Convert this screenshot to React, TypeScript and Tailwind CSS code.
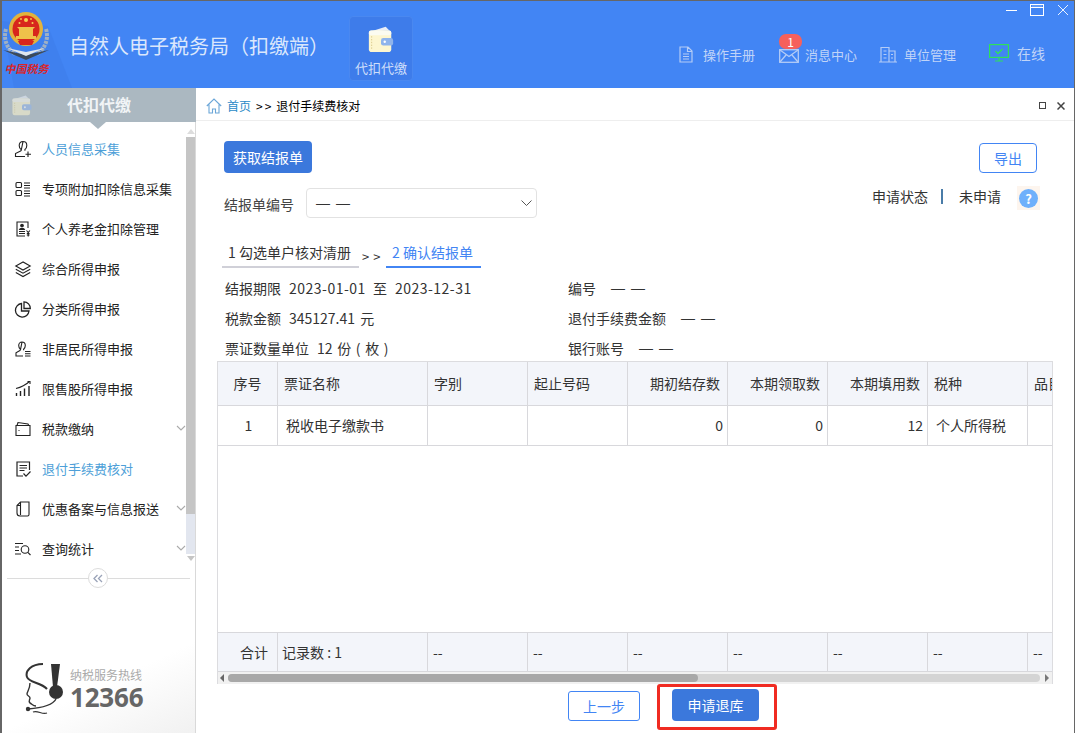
import React from "react";

const S = (p: React.SVGProps<SVGSVGElement>) => (
  <svg viewBox="0 0 18 18" width="18" height="18" fill="none" stroke="#222" strokeWidth="1.1" {...p} />
);

const Wallet = ({ w = 30, dim = false }: { w?: number; dim?: boolean }) => (
  <svg viewBox="0 0 30 30" width={w} height={w} style={{ opacity: dim ? 0.55 : 1 }}>
    <path d="M4 7 L20 2 L24 6 Z" fill="#e8eef8" />
    <rect x="2" y="6" width="24" height="23" rx="3" fill="#fdf6cf" />
    <rect x="2" y="6" width="24" height="5" rx="2" fill="#fbfbf0" />
    <path d="M5 12v14" stroke="#d8c98a" strokeWidth="1" strokeDasharray="1.5 1.5" />
    <rect x="15" y="14" width="13" height="8" rx="2.5" fill="#8fb4ec" />
    <circle cx="19" cy="18" r="1.3" fill="#fff" />
  </svg>
);

const icons: Record<string, React.ReactNode> = {
  person: (
    <S>
      <path d="M9 1.500c2.500 0 3.800 1.700 3.800 3.900 0 1.900-.9 3.300-1.900 4.100v1.300M7.100 10.800V9.500c-1-.8-1.900-2.200-1.900-4.100C5.200 3.200 6.500 1.500 9 1.500Z" />
      <path d="M7.100 10.800 1.500 13.500V16.500h9.500M14 11.500v5.500M11.500 14.200H17" />
    </S>
  ),
  list: (
    <S>
      <rect x="2" y="2.500" width="5.500" height="5" rx="1" />
      <rect x="2" y="10.500" width="5.500" height="5" rx="1" />
      <path d="M10 3h6M10 5.500h6M10 8h6M10 11h6M10 13.500h6M10 16h6" />
    </S>
  ),
  pension: (
    <S>
      <path d="M14 8V2H3v14h8" />
      <circle cx="8" cy="5.500" r="1.300" fill="#222" />
      <path d="M5.500 9.500c.3-1.500 4.700-1.500 5 0ZM5 11.500h6M5 13.500h6" />
      <path d="M12.500 10.500l1.700 2 1.700-2M14.200 12.500v4M12.800 13.500h2.800M12.800 15h2.800" />
    </S>
  ),
  layers: (
    <S>
      <path d="M9 2 1.800 6 9 10l7.200-4Z" />
      <path d="M1.800 9.200 9 13.200l7.200-4M1.800 12.500 9 16.500l7.200-4" />
    </S>
  ),
  pie: (
    <S strokeWidth="1.300">
      <path d="M7.500 3.500a6.800 6.800 0 1 0 7.500 7.500H7.500Z" />
      <path d="M10 1.800a6.500 6.500 0 0 1 6.300 6.700H10Z" />
    </S>
  ),
  nonres: (
    <S>
      <path d="M8 2c2 0 3.300 1.500 3.300 3.500 0 1.700-.8 3-1.700 3.700v1M6.400 10.200v-1c-.9-.7-1.700-2-1.700-3.700C4.700 3.500 6 2 8 2Z" />
      <path d="M6.400 10.200 2 12.800V16h7M11 11.500h5.500M11 13.700h5.500M11 16h5.500" />
    </S>
  ),
  bars: (
    <S strokeWidth="1.400">
      <path d="M2.500 16v-3M6.500 16v-5M10.500 16V8.500M15 16V6" />
      <path d="M2 8.500C6 7.500 11 5.500 15.500 1.500" strokeWidth="1.100" />
      <path d="M13.500 1.500h2.500V4" strokeWidth="1.100" />
    </S>
  ),
  wallet: (
    <S>
      <path d="M2 6V15.500H16V5.500H2ZM3 5.500 4 2.500l10 1.500.8 1.500" />
      <path d="M4.500 10.500h1" />
    </S>
  ),
  doc: (
    <S strokeWidth="1.200">
      <path d="M9 16H3V2h12.500v8" />
      <path d="M5.500 5.500h7.500M5.500 8h7.500M5.500 10.500h5" />
      <path d="M9.500 13.500l2.500 2.700 4.500-4.700" />
    </S>
  ),
  copy: (
    <S>
      <path d="M6.500 2H15v12.500a1.500 1.500 0 0 1-1.500 1.500H6a3 3 0 0 1-3-3V5.500Z" />
      <path d="M6.500 2v13M3 5.500h3.500" />
    </S>
  ),
  search: (
    <S>
      <path d="M1 3.500h8M1 7h4M1 10.500h4M1 14h6" />
      <circle cx="11" cy="9.500" r="3.800" />
      <path d="M13.800 12.300 16.500 15" />
    </S>
  ),
};

const menu = [
  { t: "人员信息采集", i: "person", on: true },
  { t: "专项附加扣除信息采集", i: "list" },
  { t: "个人养老金扣除管理", i: "pension" },
  { t: "综合所得申报", i: "layers" },
  { t: "分类所得申报", i: "pie" },
  { t: "非居民所得申报", i: "nonres" },
  { t: "限售股所得申报", i: "bars" },
  { t: "税款缴纳", i: "wallet", arrow: true },
  { t: "退付手续费核对", i: "doc", on: true },
  { t: "优惠备案与信息报送", i: "copy", arrow: true },
  { t: "查询统计", i: "search", arrow: true },
];

const Emblem = () => (
  <svg viewBox="0 0 50 50" width="50" height="50">
    <path d="M5 18C2 28 6 38 14 43M45 18c3 10-1 20-9 25" stroke="#9fb0c4" strokeWidth="4" strokeDasharray="3 1" fill="none" />
    <path d="M2 39 25 49 48 39 25 44Z" fill="#3c4a5a" />
    <path d="M6 37 25 45 44 37 25 41Z" fill="#dfe6ee" />
    <circle cx="25" cy="18" r="17" fill="#e2b33c" />
    <circle cx="25" cy="18" r="13.500" fill="#d8261c" />
    <path d="M15 25h20v3H15ZM18 18h14v7H18Z" fill="#efc14a" />
    <path d="M16 16h18l-2 2H18Z" fill="#efc14a" />
    <circle cx="25" cy="9" r="2" fill="#f5d050" />
    <circle cx="18.500" cy="12" r="1" fill="#f5d050" />
    <circle cx="31.500" cy="12" r="1" fill="#f5d050" />
    <circle cx="20" cy="8" r=".9" fill="#f5d050" />
    <circle cx="30" cy="8" r=".9" fill="#f5d050" />
    <path d="M17 30h16l-2 4H19Z" fill="#d8261c" />
  </svg>
);

const TopLink = ({ icon, text, wide }: { icon: React.ReactNode; text: string; wide?: boolean }) => (
  <div className={`flex items-center ${wide ? "text-[14px]" : "text-[13px]"} text-[#c0d4f8]`}>
    {icon}
    <span>{text}</span>
  </div>
);

const cols = "grid grid-cols-[60px_150px_100px_100px_100px_100px_100px_100px_100px] w-[1010px]";
const cell = "flex items-center border-r border-[#d8d8dc] text-[14px] text-[#333] min-w-0 whitespace-nowrap";

const Info = ({ label, children, gap = "ml-2" }: { label: string; children: React.ReactNode; gap?: string }) => (
  <div className="h-[30px] flex items-center text-[14px] text-[#333] whitespace-pre">
    <span>{label}</span>
    <span className={gap}>{children}</span>
  </div>
);

const Dash = () => <span className="font-['Liberation_Sans'] tracking-[1px]">— —</span>;

export default function App() {
  return (
    <div
      className="w-[1075px] h-[733px] flex flex-col overflow-hidden bg-white border-t border-l-2 border-r border-[#666666]"
      style={{ fontFamily: '"Noto Sans CJK SC", "Noto Sans", sans-serif' }}
    >
      {/* header */}
      <header className="h-[87px] shrink-0 bg-[#4285f4] flex relative">
        <svg className="absolute left-0 top-0" width="90" height="87">
          <path d="M0 20 L46 25 L70 87 H12 Z" fill="#3f80ee" />
        </svg>
        <div className="relative w-[67px] shrink-0 pt-[10px] flex flex-col items-center">
          <div className="w-[50px] -ml-[20px]"><Emblem /></div>
          <span className="-ml-[18px] mt-px text-[11px] leading-[13px] font-bold italic text-[#d9252b] whitespace-nowrap">中国税务</span>
        </div>
        <h1 className="relative w-[280px] shrink-0 text-[20px] leading-[28px] font-normal text-[#dbe7fc] whitespace-nowrap pt-[31px]">自然人电子税务局（扣缴端）</h1>
        <div className="relative mt-[15px] w-[64px] h-[65px] rounded-[4px] bg-[#3e7cea] border border-[#4a88f0] flex flex-col items-center pt-[8px]">
          <Wallet w={28} />
          <span className="mt-[7px] text-[13px] leading-[16px] text-[#cfdffa] whitespace-nowrap">代扣代缴</span>
        </div>
        <div className="relative flex-1 flex flex-col">
          <div className="h-[21px] flex justify-end items-start gap-[12px] pr-[4px] pt-[3px]">
            <svg width="12" height="14"><path d="M0 6.500h11" stroke="#fff" /></svg>
            <svg width="15" height="13"><rect x=".5" y=".5" width="13" height="11" fill="none" stroke="#fff" /><path d="M1 3.500h12" stroke="#fff" /><path d="M2.500 2h9" stroke="#fff" strokeWidth=".7" strokeDasharray="1 1" /></svg>
            <svg width="13" height="13"><path d="M1 1l10 10M11 1 1 11" stroke="#fff" strokeWidth=".9" /></svg>
          </div>
          <div className="flex items-center pl-[265px] pt-[21px] h-[44px]">
            <div className="w-[101px]">
              <TopLink
                text="操作手册"
                icon={
                  <svg width="16" height="17" viewBox="0 0 16 17" className="mr-[9px]" fill="none" stroke="#b4ccf6" strokeWidth="1.200">
                    <path d="M2 1h8l4 4v11H2ZM9.500 1v4.500H14M5 8h6M5 10.500h6M5 13h6" />
                  </svg>
                }
              />
            </div>
            <div className="w-[100px] relative">
              <span className="absolute -top-[11px] left-0 w-[23px] h-[15px] rounded-[7px] bg-[#f6605c] text-white text-[12px] leading-[15px] text-center z-10">1</span>
              <TopLink
                text="消息中心"
                icon={
                  <svg width="20" height="14" viewBox="0 0 20 14" className="mr-[6px] mt-[2px]" fill="none" stroke="#b4ccf6" strokeWidth="1.300">
                    <rect x=".7" y=".7" width="18.600" height="12.600" />
                    <path d="M1 1l9 6.500L19 1M1 13l6-7M19 13l-6-7" />
                  </svg>
                }
              />
            </div>
            <div className="w-[110px]">
              <TopLink
                text="单位管理"
                icon={
                  <svg width="18" height="17" viewBox="0 0 18 17" className="mr-[7px]" fill="none" stroke="#b4ccf6" strokeWidth="1.200">
                    <path d="M0 16h18M2 16V1.500h8V16M10 5h6v11M4.500 5h3M4.500 8.500h3M4.500 12h3M12 8.500h2M12 12h2" />
                  </svg>
                }
              />
            </div>
            <div className="-mt-[3px]">
              <TopLink
                wide
                text="在线"
                icon={
                  <svg width="20" height="18" viewBox="0 0 20 18" className="mr-[8px]" fill="none" stroke="#2fe05a" strokeWidth="1.200">
                    <rect x=".6" y=".6" width="18.800" height="12.800" />
                    <path d="M6.500 7l2.500 2.500L13.500 5" strokeWidth="1.400" />
                    <path d="M10 13.500v3M6 17h8" />
                  </svg>
                }
              />
            </div>
          </div>
        </div>
      </header>

      <div className="flex-1 flex min-h-0">
        {/* sidebar */}
        <aside className="w-[194px] shrink-0 flex flex-col border-r border-[#d9d9d9] relative">
          <div className="h-[34px] shrink-0 bg-[#abb8c1] flex items-center relative -mr-px">
            <div className="ml-[9px] w-[56px]"><Wallet w={22} dim /></div>
            <span className="text-[16px] font-bold text-[#f1f4f6] -mt-[2px]">代扣代缴</span>
            <svg className="absolute left-[88px] top-[34px] z-10" width="16" height="7"><path d="M0 0h16L8 7Z" fill="#abb8c1" /></svg>
          </div>
          <div className="h-[440px] shrink-0 flex">
            <ul className="flex-1 pt-[7px] overflow-hidden">
              {menu.map((m) => (
                <li key={m.t} className="h-10 flex items-center pl-[12px] pr-0">
                  <span className="w-[28px] shrink-0">{icons[m.i]}</span>
                  <span className={`text-[13px] whitespace-nowrap ${m.on ? "text-[#4e9fd8]" : "text-[#222]"}`}>{m.t}</span>
                  {m.arrow && (
                    <svg className="ml-auto -mt-[2px]" width="10" height="6"><path d="M1 1l4 4 4-4" fill="none" stroke="#aaa" strokeWidth="1.100" /></svg>
                  )}
                </li>
              ))}
            </ul>
            <div className="w-[9px] shrink-0 flex flex-col">
              <div className="h-[15px] flex items-end justify-center pb-[3px]">
                <svg width="8" height="5"><path d="M4 0l4 5H0Z" fill="#ddd" /></svg>
              </div>
              <div className="h-[377px] bg-[#c5c5c5]" />
              <div className="flex-1 bg-[#e2e6ef]" />
              <div className="h-[8px] bg-white flex items-center justify-center">
                <svg width="8" height="5"><path d="M0 0h8L4 5Z" fill="#c5c5c5" /></svg>
              </div>
            </div>
          </div>
          <div className="h-[32px] shrink-0 flex items-center pl-[5px] pr-[5px] relative">
            <div className="flex-1 h-px bg-[#dcdcdc]" />
            <div className="absolute left-[86px] top-[6px] w-5 h-5 rounded-full bg-white border border-[#dcdcdc] flex items-center justify-center">
              <svg width="10" height="9"><path d="M4.500 1 1 4.500 4.500 8M9 1 5.500 4.500 9 8" fill="none" stroke="#9aa3b8" strokeWidth="1.300" /></svg>
            </div>
          </div>
          <div className="flex-1 flex items-start pl-[23px] pt-[70px] bg-[linear-gradient(155deg,#ffffff_60%,#f1f1f1_100%)]">
            <svg width="40" height="54" viewBox="0 0 40 54" className="shrink-0 -mt-[1px]">
              <path d="M18 1C6 1 0 8 2 14c2 6 14 5 20 12" fill="none" stroke="#333" strokeWidth="2" />
              <path d="M26 1h9l-3 23h-4Z" fill="#333" />
              <circle cx="31" cy="29" r="7" fill="#333" />
              <path d="M5 20c0 6-3 9-3 11 0 2 3 2 3 4 0 2-2 3 0 5 2 1 3 3 6 3" fill="none" stroke="#333" strokeWidth="1.400" />
              <path d="M31 36C28 42 16 45 3 46" fill="none" stroke="#333" strokeWidth="1.400" />
              <circle cx="3" cy="46" r="2.200" fill="#333" />
              <path d="M8 49c5-2 9 3 14 1" fill="none" stroke="#333" strokeWidth="1.200" />
            </svg>
            <div className="ml-[5px] mt-[3px] flex flex-col">
              <span className="text-[12px] leading-[16px] text-[#aaaaaa] whitespace-nowrap">纳税服务热线</span>
              <span className="text-[26px] leading-[28px] font-bold text-[#666] tracking-[-0.2px]" style={{ fontFamily: '"Open Sans", sans-serif' }}>12366</span>
            </div>
          </div>
        </aside>

        {/* main */}
        <main className="flex-1 min-w-0 flex flex-col">
          <div className="h-[33px] shrink-0 border-b border-[#eeeeee] flex items-center pl-[10px] pr-[9px] pt-[3px] text-[12px]">
            <svg width="16" height="16" viewBox="0 0 16 16" fill="none" stroke="#6ba6d8" strokeWidth="1.100" className="mr-[5px]">
              <path d="M.8 8 8 1l7.200 7M3 6.500V15h3.500v-4h3v4H13V6.500" />
            </svg>
            <span className="text-[#2a8ac7]">首页</span>
            <span className="ml-[5px] text-black tracking-[2px]">&gt;&gt;</span>
            <span className="ml-[3px] text-black">退付手续费核对</span>
            <div className="ml-auto flex items-center gap-[11px]">
              <div className="w-[7px] h-[7px] border-[1.5px] border-[#444]" />
              <svg width="8" height="8"><path d="M.5.5l7 7M7.500.5l-7 7" stroke="#444" strokeWidth="1.500" /></svg>
            </div>
          </div>

          <div className="flex-1 min-h-0 flex flex-col pl-[21px] pr-[21px]">
            <div className="flex justify-between items-start pl-[7px] pt-[20px] h-[66px] shrink-0 pr-[16px]">
              <button className="w-[88px] h-[32px] rounded-[4px] bg-[#3b78dc] text-white text-[14px]">获取结报单</button>
              <button className="mt-[2px] w-[58px] h-[30px] rounded-[4px] border border-[#4285f4] text-[#4285f4] text-[14px]">导出</button>
            </div>
            <div className="flex items-start pl-[7px] h-[44px] shrink-0 pr-[13px] pt-[1px]">
              <span className="text-[14px] text-[#444] mt-[6px] leading-[20px]">结报单编号</span>
              <div className="ml-[12px] w-[231px] h-[30px] border border-[#e2e2e2] rounded-[4px] flex items-center pl-[9px] pr-[4px] text-[14px] text-[#333]">
                <Dash />
                <svg className="ml-auto" width="11" height="7"><path d="M.5.5l5 5 5-5" fill="none" stroke="#555" /></svg>
              </div>
              <div className="ml-auto flex items-center h-[24px] -mt-[2px] text-[14px] text-[#333]">
                <div className="flex items-center mb-[4px]">
                  <span>申请状态</span>
                  <span className="w-[2px] h-[15px] bg-[#4a7ca8] ml-[13px] mr-[16px]" />
                  <span>未申请</span>
                </div>
                <div className="ml-[16px] w-[23px] h-[24px] bg-[#fdf5ee] flex items-center justify-center">
                  <span className="w-[19px] h-[19px] rounded-full bg-[#6fb0fb] text-white text-[13px] font-bold leading-[19px] text-center">?</span>
                </div>
              </div>
            </div>
            <div className="flex items-start h-[37px] shrink-0 pl-[5px] pt-[1px] text-[14px]">
              <div className="w-[137px] h-[36px] pt-[10px] leading-[20px] pl-[6px] border-b-2 border-[#d0d0d8] text-[#333] whitespace-nowrap">1 勾选单户核对清册</div>
              <span className="ml-[3px] mt-[15px] w-[24px] text-[13px] leading-[20px] text-[#333] tracking-[4px]">&gt;&gt;</span>
              <div className="w-[95px] h-[36px] pt-[10px] leading-[20px] pl-[6px] border-b-2 border-[#4285f4] text-[#4285f4] whitespace-nowrap">2 确认结报单</div>
            </div>
            <div className="grid grid-cols-[343px_1fr] pl-[8px] h-[90px] shrink-0 mt-[5px]">
              <Info label="结报期限">
                <span className="tracking-[0.5px]">2023-01-01</span>
                <span className="ml-[7px]">至</span>
                <span className="ml-[8px] tracking-[0.5px]">2023-12-31</span>
              </Info>
              <Info label="编号" gap="ml-[15px]"><Dash /></Info>
              <Info label="税款金额">
                <span className="[word-spacing:2px]">345127.41 元</span>
              </Info>
              <Info label="退付手续费金额" gap="ml-[15px]"><Dash /></Info>
              <Info label="票证数量单位">
                <span className="[word-spacing:1.500px]">12 份 ( 枚 )</span>
              </Info>
              <Info label="银行账号" gap="ml-[15px]"><Dash /></Info>
            </div>

            {/* table */}
            <div className="w-[836px] h-[323px] shrink-0 flex flex-col overflow-hidden border-l border-r border-t border-[#dcdcdf] -mt-[2px]">
              <div className={`${cols} h-[44px] bg-[#f3f5fa] border-b border-[#d8d8dc] shrink-0`}>
                <div className={`${cell} justify-center`}>序号</div>
                <div className={`${cell} pl-[6px]`}>票证名称</div>
                <div className={`${cell} pl-[6px]`}>字别</div>
                <div className={`${cell} pl-[6px]`}>起止号码</div>
                <div className={`${cell} justify-end pr-[7px]`}>期初结存数</div>
                <div className={`${cell} justify-end pr-[7px]`}>本期领取数</div>
                <div className={`${cell} justify-end pr-[7px]`}>本期填用数</div>
                <div className={`${cell} pl-[6px]`}>税种</div>
                <div className={`${cell} pl-[6px]`}>品目</div>
              </div>
              <div className={`${cols} h-[40px] border-b border-[#d8d8dc] shrink-0`}>
                <div className={`${cell} justify-center pl-[2px]`}>1</div>
                <div className={`${cell} pl-[8px]`}>税收电子缴款书</div>
                <div className={cell} />
                <div className={cell} />
                <div className={`${cell} justify-end pr-[4px]`}>0</div>
                <div className={`${cell} justify-end pr-[4px]`}>0</div>
                <div className={`${cell} justify-end pr-[4px]`}>12</div>
                <div className={`${cell} pl-[8px]`}>个人所得税</div>
                <div className={cell} />
              </div>
              <div className="flex-1" />
              <div className={`${cols} h-[40px] bg-[#f3f5fa] border-t border-b border-[#d8d8dc] shrink-0`}>
                <div className={`${cell} justify-end pr-[9px]`}>合计</div>
                <div className={`${cell} pl-[4px]`}>记录数 : 1</div>
                {[0, 1, 2, 3, 4, 5, 6].map((i) => (
                  <div key={i} className={`${cell} pl-[5px]`}>--</div>
                ))}
              </div>
              <div className="h-[12px] shrink-0 bg-[#f1f1f1] flex items-center">
                <svg width="8" height="8" className="ml-[1px] shrink-0"><path d="M5 0v8L1 4Z" fill="#666" /></svg>
                <div className="flex-1 h-[8px] rounded-[4px] bg-[#d4d4d4] ml-[1px] mr-[3px]">
                  <div className="w-[470px] h-[8px] rounded-[4px] bg-[#a8a8a8]" />
                </div>
                <svg width="8" height="8" className="mr-[1px] shrink-0"><path d="M2 0v8l4-4Z" fill="#777" /></svg>
              </div>
            </div>

            <div className="flex items-start shrink-0 pl-[351px]">
              <button className="mt-[7px] w-[72px] h-[30px] rounded-[3px] border border-[#4285f4] text-[#4285f4] text-[14px]">上一步</button>
              <div className="ml-[17px] w-[120px] h-[46px] border-[3px] border-[#f02b22] rounded-[3px] flex items-start pt-[2px] pl-[12px]">
                <button className="w-[87px] h-[32px] rounded-[4px] bg-[#3b78dc] text-white text-[14px]">申请退库</button>
              </div>
            </div>
          </div>
        </main>
      </div>
    </div>
  );
}
